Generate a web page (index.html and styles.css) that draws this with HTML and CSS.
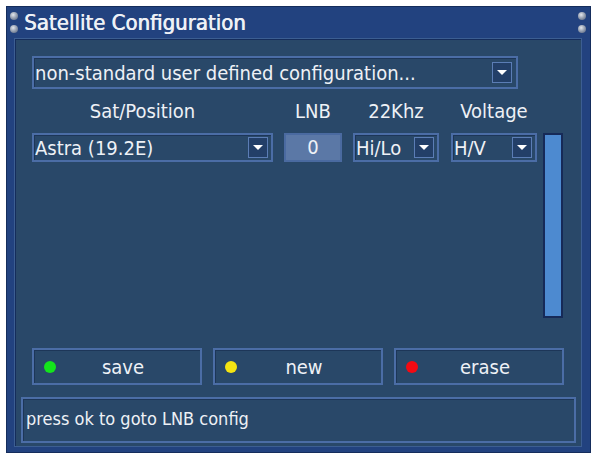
FILE: index.html
```html
<!DOCTYPE html>
<html lang="en">
<head>
    <meta charset="UTF-8">
    <title>Satellite Configuration</title>
    <link rel="stylesheet" href="styles.css">
</head>
<body>
    <div class="window">
        <!-- Title bar -->
        <header class="titlebar">
            <div class="screws"><span class="screw"></span><span class="screw"></span></div>
            <h1 class="title">Satellite Configuration</h1>
            <div class="screws"><span class="screw"></span><span class="screw"></span></div>
        </header>

        <!-- Main panel -->
        <main class="panel">
            <div class="select select-mode">
                <span>non-standard user defined configuration...</span>
                <span class="arrow"></span>
            </div>

            <div class="heads">
                <div class="col col-sat head-sat">Sat/Position</div>
                <div class="col col-lnb">LNB</div>
                <div class="col col-22k">22Khz</div>
                <div class="col col-volt">Voltage</div>
            </div>

            <div class="list-area">
                <div class="rows">
                    <div class="row">
                        <div class="select col col-sat"><span>Astra (19.2E)</span><span class="arrow"></span></div>
                        <div class="lnb col col-lnb">0</div>
                        <div class="select col col-22k"><span>Hi/Lo</span><span class="arrow"></span></div>
                        <div class="select col col-volt"><span>H/V</span><span class="arrow"></span></div>
                    </div>
                </div>
                <div class="scrollbar"></div>
            </div>

            <div class="buttons">
                <div class="btn"><span class="dot green"></span><span class="label">save</span></div>
                <div class="btn"><span class="dot yellow"></span><span class="label">new</span></div>
                <div class="btn"><span class="dot red"></span><span class="label">erase</span></div>
            </div>

            <div class="status">press ok to goto LNB config</div>
        </main>
    </div>
</body>
</html>
```

FILE: styles.css
```css
/* Receiver menu colours */
:root {
    --frame: #22427f;
    --frame-dark: #152d5c;
    --panel: #294869;
    --box-border: #4b6da6;
    --box-dark: #1d3658;
    --text: #eef1f6;
}

* {
    box-sizing: border-box;
}

body {
    margin: 0;
    background-color: #ffffff;
    font-family: "DejaVu Sans Condensed", "DejaVu Sans", sans-serif;
    color: var(--text);
}

/* Outer window */
.window {
    margin: 6px 0 0 6px;
    width: 585px;
    height: 447px;
    background-color: var(--frame);
    border: 1px solid var(--frame-dark);
    display: flex;
    flex-direction: column;
}

.titlebar {
    height: 31px;
    display: flex;
    align-items: center;
    padding: 0 4px 0 3px;
}

.screws {
    display: flex;
    flex-direction: column;
    gap: 5px;
    width: 8px;
}

.screw {
    width: 8px;
    height: 8px;
    border-radius: 50%;
    background: radial-gradient(circle at 40% 35%, #e4e8ee 0%, #9aa4b4 45%, #4c5a78 100%);
}

.title {
    flex-grow: 1;
    margin: 0 0 0 6px;
    font-size: 22px;
    font-weight: normal;
    text-shadow: 0.6px 0 0 var(--text);
    color: var(--text);
}

/* Inner panel */
.panel {
    flex-grow: 1;
    margin: 0 8px 5px 7px;
    background-color: var(--panel);
    border: 1px solid #3c5e92;
    box-shadow: inset 1px 1px 0 var(--frame-dark);
    padding: 17px 0 0 17px;
    display: flex;
    flex-direction: column;
}

.select {
    display: flex;
    align-items: center;
    justify-content: space-between;
    height: 29px;
    padding: 0 3px 0 1px;
    border: 2px solid var(--box-border);
    box-shadow: inset 1px 1px 0 var(--box-dark);
    font-size: 20px;
    white-space: nowrap;
}

.select-mode {
    width: 486px;
    height: 33px;
    padding-right: 4px;
}

.arrow {
    width: 20px;
    height: 21px;
    border: 1px solid #5b7db5;
    background-color: #233f68;
    display: flex;
    align-items: center;
    justify-content: center;
    flex-shrink: 0;
}

.arrow::after {
    content: "";
    border-left: 5px solid transparent;
    border-right: 5px solid transparent;
    border-top: 5px solid #ffffff;
}

/* Columns */
.col-sat { width: 241px; }
.col-lnb { width: 58px; margin-left: 11px; }
.col-22k { width: 86px; margin-left: 11px; }
.col-volt { width: 86px; margin-left: 12px; }

.heads {
    display: flex;
    margin-top: 10px;
    height: 25px;
    font-size: 20px;
}

.heads .col {
    text-align: center;
}

.head-sat {
    padding-right: 20px;
}

.list-area {
    display: flex;
    margin-top: 9px;
    height: 185px;
}

.rows {
    width: 511px;
}

.row {
    display: flex;
}

.lnb {
    height: 29px;
    background-color: #5b78a6;
    border: 2px solid #4a6aa0;
    text-align: center;
    font-size: 20px;
    line-height: 25px;
}

.scrollbar {
    width: 20px;
    height: 185px;
    background-color: #4d8ad0;
    border: 2px solid #162a58;
}

/* Colour buttons */
.buttons {
    display: flex;
    gap: 11px;
    margin-top: 30px;
}

.btn {
    width: 170px;
    height: 37px;
    display: flex;
    align-items: center;
    padding-left: 10px;
    border: 2px solid var(--box-border);
    box-shadow: inset 1px 1px 0 var(--box-dark);
    font-size: 20px;
}

.dot {
    width: 12px;
    height: 12px;
    border-radius: 50%;
}

.green { background-color: #14e41c; }
.yellow { background-color: #f4e412; }
.red { background-color: #f40a12; }

.label {
    flex-grow: 1;
    text-align: center;
    padding-right: 10px;
}

/* Status line */
.status {
    margin: 12px 0 0 -11px;
    width: 555px;
    height: 46px;
    padding: 0 0 3px 3px;
    display: flex;
    align-items: center;
    border: 2px solid var(--box-border);
    box-shadow: inset 1px 1px 0 var(--box-dark);
    font-size: 18px;
}
```
